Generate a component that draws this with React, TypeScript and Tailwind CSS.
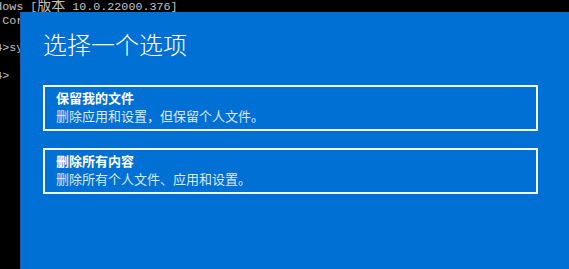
import React from "react";

type Option = {
  title: string;
  desc: string;
};

const options: Option[] = [
  { title: "保留我的文件", desc: "删除应用和设置，但保留个人文件。" },
  { title: "删除所有内容", desc: "删除所有个人文件、应用和设置。" },
];

// each entry: ascii / cjk runs so cjk glyphs fill two console cells
const consoleLines: [string, string][][] = [
  [["a", "Microsoft Windows ["], ["c", "版本"], ["a", " 10.0.22000.376]"]],
  [["a", "(c) Microsoft Corporation"], ["c", "。保留所有权利。"]],
  [],
  [["a", "C:\\Users\\abc14>systemreset"]],
  [],
  [["a", "C:\\Users\\abc14>"]],
];

export default function App() {
  return (
    <div className="relative w-[569px] h-[269px] overflow-hidden bg-black">
      {/* console behind the dialog */}
      <div
        className="absolute left-[-96px] top-[-1px] text-[11.7px] leading-[14px] text-[#c0c0c0] whitespace-pre"
        style={{ fontFamily: '"Liberation Mono", "Noto Sans CJK SC", monospace' }}
      >
        {consoleLines.map((line, i) => (
          <div key={i} className="h-[14px]">
            {line.map(([kind, txt], j) =>
              kind === "c" ? (
                <span key={j} className="text-[14px]">
                  {txt}
                </span>
              ) : (
                <span key={j}>{txt}</span>
              )
            )}
          </div>
        ))}
      </div>

      {/* reset dialog */}
      <div
        className="absolute left-[20px] top-[12px] right-0 bottom-0 bg-[#0070d4] border-l border-[#1c5aa3] pl-[22px] pr-[31px] pt-[16px]"
        style={{ fontFamily: '"Noto Sans CJK SC", "Noto Sans", sans-serif' }}
      >
        <h1 className="text-[24px] leading-[32px] font-light text-white">选择一个选项</h1>
        <div className="mt-[25px] flex flex-col gap-[17px]">
          {options.map((o) => (
            <div key={o.title} className="h-[46px] border-2 border-[#f2f7fd] px-[11px] pt-[2px]">
              <p className="text-[13px] leading-[18px] font-bold text-white">{o.title}</p>
              <p className="text-[13px] leading-[18px] text-[#dbe9f8]">{o.desc}</p>
            </div>
          ))}
        </div>
      </div>
    </div>
  );
}
